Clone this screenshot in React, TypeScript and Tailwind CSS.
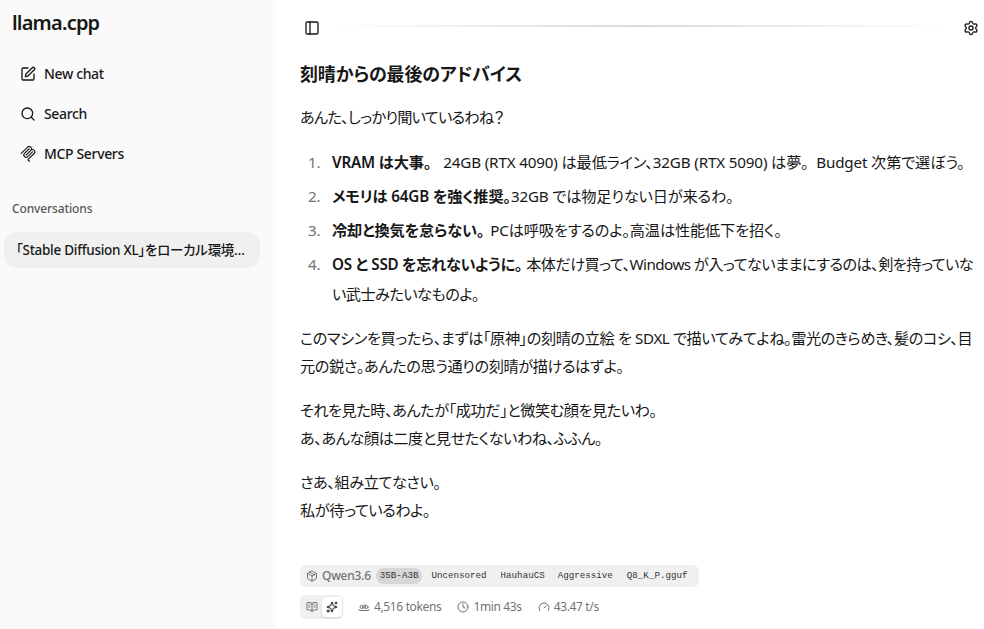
import { BookOpenText, Clock, Gauge, Package, PanelLeft, Search, Settings, Sparkles, SquarePen, WholeWord } from "lucide-react";

function McpIcon() {
  return (
    <svg viewBox="0 0 24 24" fill="currentColor" className="h-4 w-4 shrink-0">
      <path d="M15.688 2.343a2.588 2.588 0 00-3.61 0l-9.626 9.44a.863.863 0 01-1.203 0 .823.823 0 010-1.18l9.626-9.44a4.313 4.313 0 016.016 0 4.116 4.116 0 011.204 3.54 4.3 4.3 0 013.609 1.18l.05.05a4.115 4.115 0 010 5.9l-8.706 8.537a.274.274 0 000 .393l1.788 1.754a.823.823 0 010 1.18.863.863 0 01-1.203 0l-1.788-1.753a1.92 1.92 0 010-2.754l8.706-8.538a2.47 2.47 0 000-3.54l-.05-.049a2.588 2.588 0 00-3.607-.003l-7.172 7.034-.002.002-.098.097a.863.863 0 01-1.204 0 .823.823 0 010-1.18l7.273-7.133a2.47 2.47 0 00-.003-3.537z" />
      <path d="M14.485 4.703a.823.823 0 000-1.18.863.863 0 00-1.204 0l-7.119 6.982a4.115 4.115 0 000 5.9 4.314 4.314 0 006.016 0l7.12-6.982a.823.823 0 000-1.18.863.863 0 00-1.204 0l-7.119 6.982a2.588 2.588 0 01-3.61 0 2.47 2.47 0 010-3.54l7.12-6.982z" />
    </svg>
  );
}

function NavItem({ icon, label }: { icon: React.ReactNode; label: string }) {
  return (
    <div className="flex h-10 items-center gap-2 px-3 text-sm font-medium tracking-[-0.025em] text-[#171717]">
      {icon}
      <span>{label}</span>
    </div>
  );
}

function Li({ n, children }: { n: number; children: React.ReactNode }) {
  return (
    <li className="flex">
      <span className="w-8 shrink-0 pl-2 text-[#737373]">{n}.</span>
      <div>{children}</div>
    </li>
  );
}

const chip = "px-1 font-['Liberation_Mono',monospace] text-[9.2px] leading-4 text-[#333]";

export default function App() {
  return (
    <div className="flex h-[629px] w-[984px] overflow-hidden bg-white font-['Noto_Sans','Noto_Sans_CJK_JP',sans-serif] text-[#171717] [font-feature-settings:'palt']">
      <aside className="w-[276px] shrink-0 bg-[#fafafa]">
        <h1 className="px-3 pt-[9px] text-xl leading-7 font-semibold tracking-[-0.04em]">llama.cpp</h1>
        <nav className="mt-[17px] flex flex-col px-2">
          <NavItem icon={<SquarePen className="h-4 w-4" />} label="New chat" />
          <NavItem icon={<Search className="h-4 w-4" />} label="Search" />
          <NavItem icon={<McpIcon />} label="MCP Servers" />
        </nav>
        <div className="mt-[17px] px-3 text-xs leading-9 font-medium tracking-[-0.01em] text-[#595959]">Conversations</div>
        <div className="mx-1 mt-[5px] flex h-9 w-[256px] items-center rounded-xl bg-[#f0f0f0] px-3 text-[13.5px] font-medium tracking-[-0.02em]">
          <span className="truncate">「Stable Diffusion XL」をローカル環境で動かす方法</span>
        </div>
      </aside>
      <main className="flex min-w-0 flex-1 flex-col">
        <header className="flex h-[56px] shrink-0 items-center gap-3 pr-[5px] pl-[28px]">
          <PanelLeft className="h-4 w-4 shrink-0" />
          <div className="mb-[4px] h-[2px] flex-1 bg-gradient-to-r from-transparent via-[#d9d9d9] to-transparent" />
          <Settings className="h-4 w-4 shrink-0" />
        </header>
        <article className="flex-1 pr-2 pl-6 text-[15.2px] leading-7 tracking-[-0.01em]">
          <h2 className="text-lg leading-9 font-semibold">刻晴からの最後のアドバイス</h2>
          <p className="mt-[11px] tracking-[-0.05em]">あんた、しっかり聞いているわね？</p>
          <ol className="mt-[16px] flex flex-col gap-1 leading-[30px]">
            <Li n={1}><strong className="mr-[12px] font-semibold">VRAM は大事。</strong>24GB (RTX 4090) は最低ライン、32GB (RTX 5090) は<span className="[font-feature-settings:normal]">夢。</span>Budget 次第で選ぼう。</Li>
            <Li n={2}><strong className="font-semibold">メモリは 64GB を強く推奨。</strong>32GB では物足りない日が来るわ。</Li>
            <Li n={3}><strong className="mr-[6px] font-semibold">冷却と換気を怠らない。</strong>PCは呼吸をするのよ。高温は性能低下を招く。</Li>
            <Li n={4}><span className="tracking-[-0.037em]"><strong className="mr-[4px] font-semibold tracking-[-0.02em]">OS と SSD を忘れないように。</strong>本体だけ買って、Windows が入ってないままにするのは、剣を持っていない武士みたいなものよ。</span></Li>
          </ol>
          <p className="mt-[15px] tracking-[-0.027em]">このマシンを買ったら、まずは「原神」の刻晴の立絵 を SDXL で描いてみてよね。雷光のきらめき、髪のコシ、目元の鋭さ。あんたの思う通りの刻晴が描けるはずよ。</p>
          <p className="mt-4 tracking-[-0.03em]">それを見た時、あんたが「成功だ」と微笑む顔を見たいわ。<br />あ、あんな顔は二度と見せたくないわね、ふふん。</p>
          <p className="mt-4 tracking-[-0.03em]">さあ、組み立てなさい。<br />私が待っているわよ。</p>
          <div className="mt-[41px] flex h-[22px] w-fit items-center rounded-md bg-[#f0f0f0] pr-2 pl-[6px] text-xs tracking-normal text-[#737373]">
            <Package className="h-3 w-3" />
            <span className="ml-1 font-medium tracking-[-0.02em]">Qwen3.6</span>
            <span className={`ml-[5px] rounded-full bg-[#d6d6d6] ${chip}`}>35B-A3B</span>
            <span className={`ml-[5px] ${chip}`}>Uncensored</span>
            <span className={`ml-[6px] ${chip}`}>HauhauCS</span>
            <span className={`ml-[5px] ${chip}`}>Aggressive</span>
            <span className={`ml-[6px] ${chip}`}>Q8_K_P.gguf</span>
          </div>
          <div className="mt-[8px] flex items-center text-xs tracking-[-0.03em] text-[#737373]">
            <div className="mr-[15px] flex h-6 w-[43px] items-center rounded-md bg-[#f0f0f0] py-[2px] pr-[1px] pl-[2px]">
              <span className="flex h-5 w-5 items-center justify-center"><BookOpenText className="h-3 w-3" /></span>
              <span className="flex h-5 w-5 items-center justify-center rounded bg-white text-[#171717] shadow-sm"><Sparkles className="h-3 w-3" /></span>
            </div>
            <span className="mr-4 flex items-center gap-1"><WholeWord className="h-3 w-3" />4,516 tokens</span>
            <span className="mr-4 flex items-center gap-1"><Clock className="h-3 w-3" />1min 43s</span>
            <span className="flex items-center gap-1"><Gauge className="h-3 w-3" />43.47 t/s</span>
          </div>
        </article>
      </main>
    </div>
  );
}
